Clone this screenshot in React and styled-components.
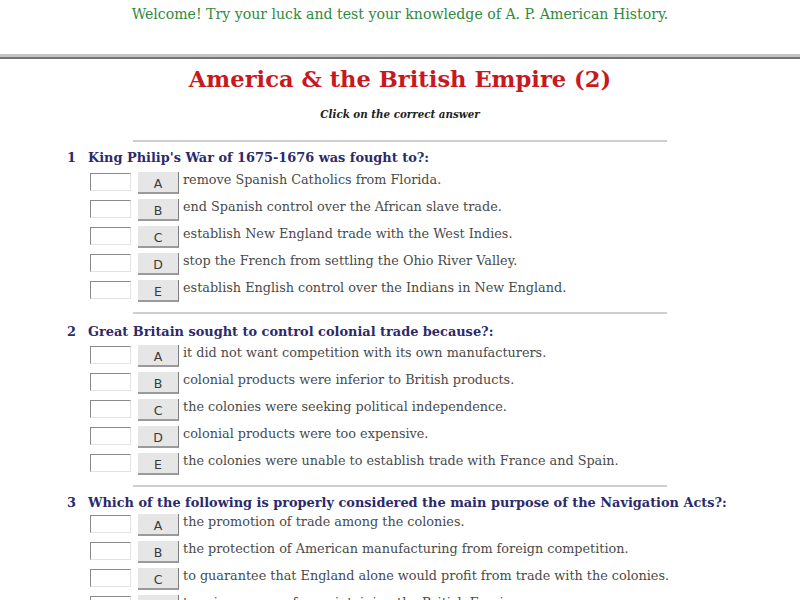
import React from 'react'
import styled, { createGlobalStyle } from 'styled-components';

const GlobalStyle = createGlobalStyle`
    body {
        margin: 0;
        background: #ffffff;
        font-family: 'DejaVu Serif', serif;
    }
`

const Page = styled.div`
    width: 800px;
    height: 600px;
    overflow: hidden;
`

const Welcome = styled.div`
    padding-top: 5px;
    text-align: center;
    font-family: 'DejaVu Serif Condensed', 'DejaVu Serif', serif;
    font-stretch: condensed;
    font-size: 15.7px;
    line-height: 18px;
    color: #2f8a3c;
`

const TopRule = styled.div`
    margin-top: 31px;
    height: 3px;
    background: #c4c4c4;
    border-bottom: 2px solid #747474;
`

const Title = styled.h1`
    margin: 6px 0 0;
    text-align: center;
    font-family: 'DejaVu Serif', serif;
    font-weight: bold;
    font-size: 22.6px;
    line-height: 28px;
    color: #c8191e;
`

const Instruction = styled.div`
    margin-top: 14px;
    text-align: center;
    font-family: 'DejaVu Serif', serif;
    font-weight: bold;
    font-style: italic;
    font-size: 10.3px;
    line-height: 14px;
    color: #222;
`

const Rule = styled.div`
    width: 534px;
    height: 2px;
    margin-top: ${p => p.$top}px;
    margin-left: 66px;
    background: #cfcfcf;
`

const Quiz = styled.div`
    margin-left: 67px;
`

const Question = styled.div`
    margin-top: ${p => p.$top}px;
`

const QuestionHead = styled.div`
    display: flex;
    font-family: 'DejaVu Serif', serif;
    font-weight: bold;
    font-size: 12.9px;
    line-height: 18px;
    color: #2b2a6b;
    white-space: nowrap;
`

const Num = styled.span`
    width: 21px;
`

const Answers = styled.div`
    margin-left: 23px;
    margin-top: ${p => p.$top}px;
`

const Row = styled.div`
    display: flex;
    align-items: center;
    height: 27px;
`

const Box = styled.input`
    width: 41px;
    height: 18px;
    box-sizing: border-box;
    margin: 0;
    padding: 0;
    border: 1px solid #e2e2e2;
    border-top-color: #8a8a8a;
    border-left-color: #8a8a8a;
    background: #fff;
`

const LetterBtn = styled.button`
    width: 41px;
    height: 22px;
    box-sizing: border-box;
    margin: 3px 0 0 7px;
    padding: 2px 0 0;
    border: none;
    border-right: 1px solid #7d7d7d;
    border-bottom: 2px solid #9a9a9a;
    background: #e6e6e6;
    font-family: 'DejaVu Sans', sans-serif;
    font-size: 12.5px;
    color: #3a3a3a;
`

const AnswerText = styled.span`
    margin-left: 4px;
    margin-top: -5px;
    font-family: 'DejaVu Serif', serif;
    font-size: 12.8px;
    color: #4a4a4a;
    white-space: nowrap;
`

const questions = [
    {
        text: "King Philip's War of 1675-1676 was fought to?:",
        answers: [
            'remove Spanish Catholics from Florida.',
            'end Spanish control over the African slave trade.',
            'establish New England trade with the West Indies.',
            'stop the French from settling the Ohio River Valley.',
            'establish English control over the Indians in New England.',
        ],
    },
    {
        text: 'Great Britain sought to control colonial trade because?:',
        answers: [
            'it did not want competition with its own manufacturers.',
            'colonial products were inferior to British products.',
            'the colonies were seeking political independence.',
            'colonial products were too expensive.',
            'the colonies were unable to establish trade with France and Spain.',
        ],
    },
    {
        text: 'Which of the following is properly considered the main purpose of the Navigation Acts?:',
        answers: [
            'the promotion of trade among the colonies.',
            'the protection of American manufacturing from foreign competition.',
            'to guarantee that England alone would profit from trade with the colonies.',
            'to raise revenue for maintaining the British Empire.',
            'to encourage colonial shipbuilding.',
        ],
    },
]

const letters = ['A', 'B', 'C', 'D', 'E']
const ruleGaps = [19, 9, 9]
const headGaps = [7, 9, 7]
const answerGaps = [1, 0, -2]

export default function App() {
    return (
        <Page>
            <GlobalStyle />
            <Welcome>Welcome! Try your luck and test your knowledge of A. P. American History.</Welcome>
            <TopRule />
            <Title>America &amp; the British Empire (2)</Title>
            <Instruction>Click on the correct answer</Instruction>
            <Quiz>
                {questions.map((q, i) => (
                    <React.Fragment key={i}>
                        <Rule $top={ruleGaps[i]} />
                        <Question $top={headGaps[i]}>
                            <QuestionHead>
                                <Num>{i + 1}</Num>
                                <span>{q.text}</span>
                            </QuestionHead>
                            <Answers $top={answerGaps[i]}>
                                {q.answers.map((a, j) => (
                                    <Row key={j}>
                                        <Box type="text" />
                                        <LetterBtn>{letters[j]}</LetterBtn>
                                        <AnswerText>{a}</AnswerText>
                                    </Row>
                                ))}
                            </Answers>
                        </Question>
                    </React.Fragment>
                ))}
            </Quiz>
        </Page>
    )
}
